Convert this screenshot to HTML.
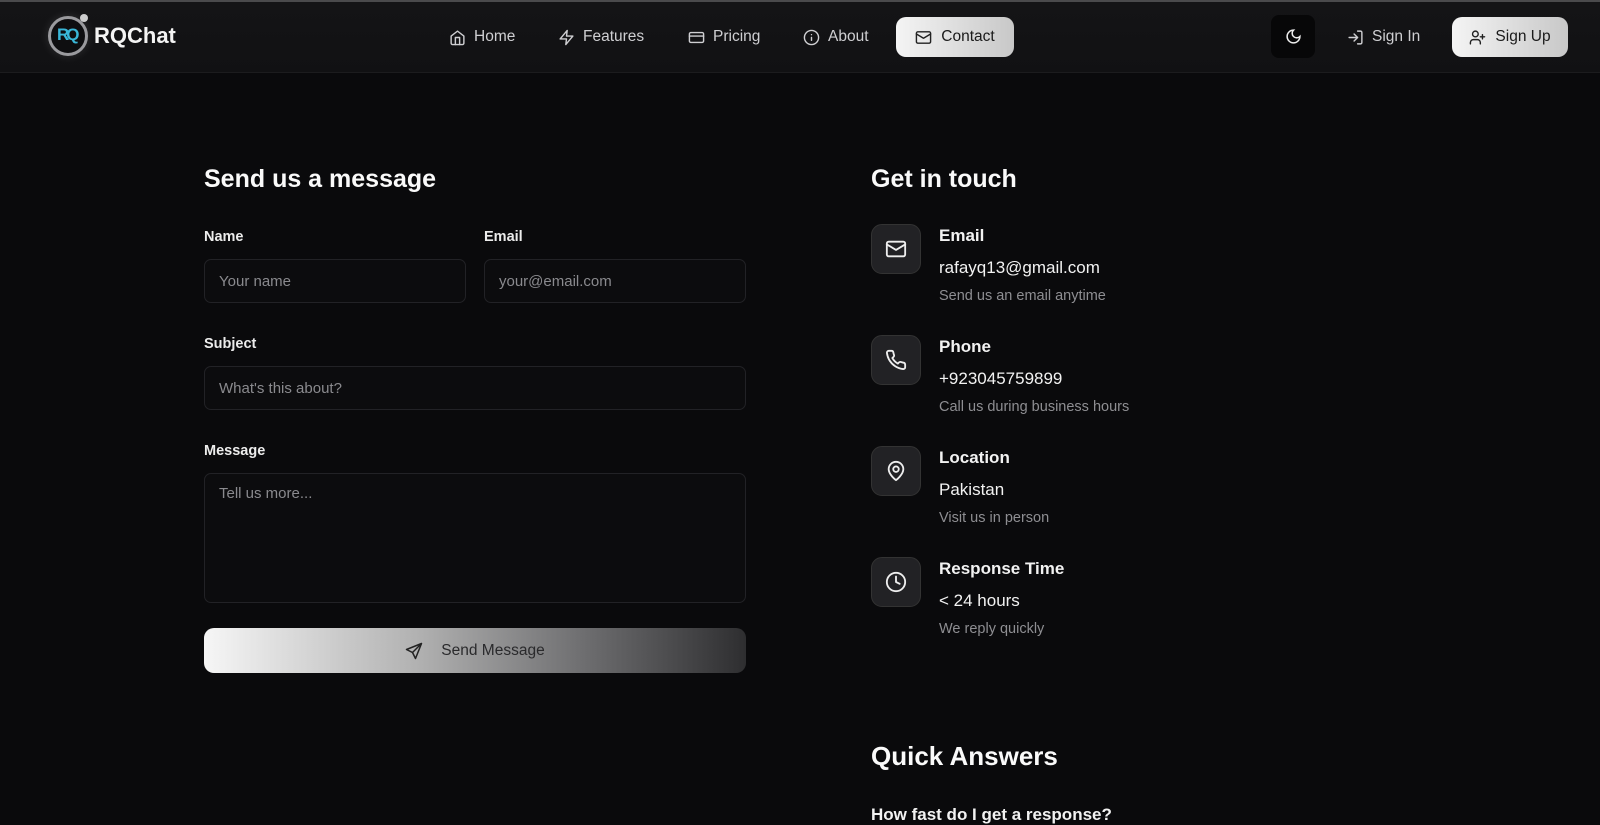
<!DOCTYPE html>
<html><head><meta charset="utf-8"><style>
*{box-sizing:border-box;margin:0;padding:0}
body{width:1600px;height:807px;overflow:hidden;background:#0a0a0c;font-family:"Liberation Sans",sans-serif;color:#f2f2f2;position:relative}
.a{position:absolute}
.hdr{left:0;top:0;width:1600px;height:73px;background:linear-gradient(180deg,#141416,#111113);border-top:2px solid #4a4a4c;border-bottom:1px solid #1c1c1e}
.nav{font-size:15.5px;color:#cfcfd2;display:flex;align-items:center;gap:8px;top:28px}
.nav svg{width:17px;height:17px;stroke:#cfcfd2;fill:none;stroke-width:2;stroke-linecap:round;stroke-linejoin:round}
.wbtn{background:linear-gradient(90deg,#f4f4f4,#c8c8c8);border-radius:10px;color:#1a1a1a;display:flex;align-items:center;justify-content:center;gap:9px;font-size:15.5px}
.wbtn svg{width:17px;height:17px;stroke:#222;fill:none;stroke-width:2;stroke-linecap:round;stroke-linejoin:round}
h2{position:absolute;font-size:25px;font-weight:bold;color:#fafafa}
.lbl{position:absolute;font-size:14.5px;font-weight:bold;color:#ececec}
.inp{position:absolute;border:1px solid #222226;border-radius:7px;background:#0c0c0e;color:#8a8a8e;font-size:15px;padding-left:14px;display:flex;align-items:center}
.ib{position:absolute;left:871px;width:50px;height:50px;border-radius:11px;background:#222225;border:1px solid #333;display:flex;align-items:center;justify-content:center}
.ib svg{width:22px;height:22px;stroke:#eee;fill:none;stroke-width:2;stroke-linecap:round;stroke-linejoin:round}
.t1{position:absolute;left:939px;font-size:17px;font-weight:bold;color:#f2f2f2}
.t2{position:absolute;left:939px;font-size:17px;color:#f2f2f2}
.t3{position:absolute;left:939px;font-size:14.5px;color:#8e8e92}
</style></head><body>
<div class="a hdr"></div>
<div class="a" style="left:48px;top:16px;width:40px;height:40px;border-radius:50%;background:#0e0e10;border:3px solid #9a9a9e;box-shadow:0 0 10px rgba(255,255,255,.12)"></div>
<div class="a" style="left:57px;top:25px;font-size:17px;font-weight:bold;color:#3ab7d8;letter-spacing:-3px">RQ</div>
<div class="a" style="left:80px;top:14px;width:8px;height:8px;border-radius:50%;background:#ccc"></div>
<div class="a" style="left:94px;top:23px;font-size:22px;font-weight:bold;color:#f4f4f4">RQChat</div>

<div class="a nav" style="left:449px"><svg viewBox="0 0 24 24"><path d="M3 10l9-7 9 7v10a2 2 0 0 1-2 2H5a2 2 0 0 1-2-2z"/><path d="M9 22V12h6v10"/></svg>Home</div>
<div class="a nav" style="left:558px"><svg viewBox="0 0 24 24"><path d="M13 2L3 14h9l-1 8 10-12h-9l1-8z"/></svg>Features</div>
<div class="a nav" style="left:688px"><svg viewBox="0 0 24 24"><rect x="2" y="5" width="20" height="14" rx="2"/><path d="M2 10h20"/></svg>Pricing</div>
<div class="a nav" style="left:803px"><svg viewBox="0 0 24 24"><circle cx="12" cy="12" r="10"/><path d="M12 16v-4M12 8h.01"/></svg>About</div>
<div class="a wbtn" style="left:896px;top:17px;width:118px;height:40px"><svg viewBox="0 0 24 24"><rect x="2" y="4" width="20" height="16" rx="2"/><path d="M22 7l-10 6L2 7"/></svg>Contact</div>

<div class="a" style="left:1271px;top:15px;width:44px;height:43px;border-radius:8px;background:#070708;display:flex;align-items:center;justify-content:center"><svg width="17" height="17" viewBox="0 0 24 24" fill="none" stroke="#eee" stroke-width="2.2" stroke-linecap="round"><path d="M12 3a6 6 0 0 0 9 9 9 9 0 1 1-9-9z"/></svg></div>
<div class="a nav" style="left:1347px"><svg viewBox="0 0 24 24"><path d="M15 3h4a2 2 0 0 1 2 2v14a2 2 0 0 1-2 2h-4M10 17l5-5-5-5M15 12H3"/></svg>Sign In</div>
<div class="a wbtn" style="left:1452px;top:17px;width:116px;height:40px"><svg viewBox="0 0 24 24"><path d="M16 21v-2a4 4 0 0 0-4-4H6a4 4 0 0 0-4 4v2"/><circle cx="9" cy="7" r="4"/><path d="M19 8v6M22 11h-6"/></svg>Sign Up</div>

<h2 style="left:204px;top:165px">Send us a message</h2>
<div class="lbl" style="left:204px;top:229px">Name</div>
<div class="lbl" style="left:484px;top:229px">Email</div>
<div class="inp" style="left:204px;top:259px;width:262px;height:44px">Your name</div>
<div class="inp" style="left:484px;top:259px;width:262px;height:44px">your@email.com</div>
<div class="lbl" style="left:204px;top:336px">Subject</div>
<div class="inp" style="left:204px;top:366px;width:542px;height:44px">What's this about?</div>
<div class="lbl" style="left:204px;top:443px">Message</div>
<div class="inp" style="left:204px;top:473px;width:542px;height:130px;align-items:flex-start;padding-top:11px">Tell us more...</div>
<div class="a" style="left:204px;top:628px;width:542px;height:45px;border-radius:10px;background:linear-gradient(90deg,#f6f6f6,#b0b0b0 40%,#6e6e70 70%,#2e2e30);display:flex;align-items:center;justify-content:center;gap:18px;color:#2a2a2c;font-size:15.5px">
<svg width="18" height="18" viewBox="0 0 24 24" fill="none" stroke="#222" stroke-width="2" stroke-linejoin="round"><path d="M22 2L2 10l8 4 4 8 8-20z"/><path d="M22 2L10 14"/></svg>Send Message</div>

<h2 style="left:871px;top:165px">Get in touch</h2>
<div class="ib" style="top:224px"><svg viewBox="0 0 24 24"><rect x="2" y="4" width="20" height="16" rx="2"/><path d="M22 7l-10 6L2 7"/></svg></div>
<div class="t1" style="top:226px">Email</div><div class="t2" style="top:258px">rafayq13@gmail.com</div><div class="t3" style="top:288px">Send us an email anytime</div>
<div class="ib" style="top:335px"><svg viewBox="0 0 24 24"><path d="M22 16.9v3a2 2 0 0 1-2.2 2 19.8 19.8 0 0 1-8.6-3.1 19.5 19.5 0 0 1-6-6A19.8 19.8 0 0 1 2.1 4.2 2 2 0 0 1 4.1 2h3a2 2 0 0 1 2 1.7c.1 1 .4 1.9.7 2.8a2 2 0 0 1-.5 2.1L8 9.9a16 16 0 0 0 6 6l1.3-1.3a2 2 0 0 1 2.1-.4c.9.3 1.8.6 2.8.7a2 2 0 0 1 1.7 2z"/></svg></div>
<div class="t1" style="top:337px">Phone</div><div class="t2" style="top:369px">+923045759899</div><div class="t3" style="top:399px">Call us during business hours</div>
<div class="ib" style="top:446px"><svg viewBox="0 0 24 24"><path d="M20 10c0 6-8 12-8 12s-8-6-8-12a8 8 0 0 1 16 0z"/><circle cx="12" cy="10" r="3"/></svg></div>
<div class="t1" style="top:448px">Location</div><div class="t2" style="top:480px">Pakistan</div><div class="t3" style="top:510px">Visit us in person</div>
<div class="ib" style="top:557px"><svg viewBox="0 0 24 24"><circle cx="12" cy="12" r="10"/><path d="M12 6v6l4 2"/></svg></div>
<div class="t1" style="top:559px">Response Time</div><div class="t2" style="top:591px">&lt; 24 hours</div><div class="t3" style="top:621px">We reply quickly</div>

<h2 style="left:871px;top:741px;font-size:26px">Quick Answers</h2>
<div class="a" style="left:871px;top:805px;font-size:17px;font-weight:bold">How fast do I get a response?</div>
</body></html>
